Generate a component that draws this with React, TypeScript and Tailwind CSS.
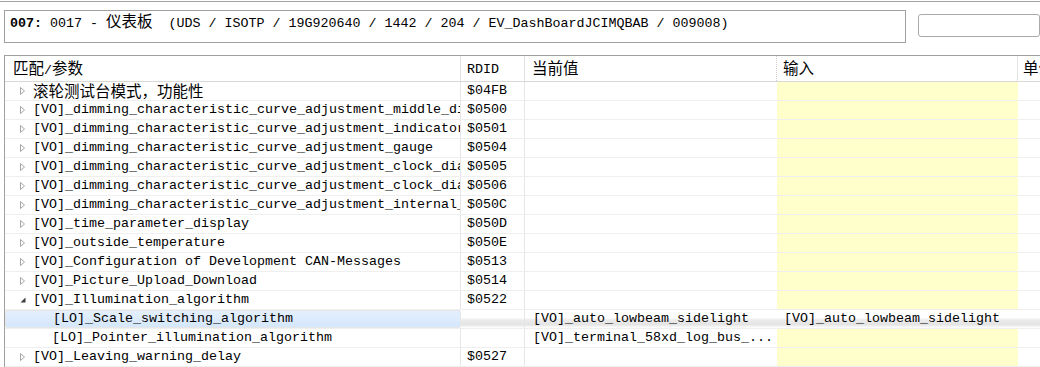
import type { ReactNode } from "react";

type Row = {
  name: string;
  rdid?: string;
  current?: string;
  input?: string;
  level?: 0 | 1;
  expanded?: boolean;
  selected?: boolean;
};

const ROWS: Row[] = [
  { name: "滚轮测试台模式，功能性", rdid: "$04FB" },
  { name: "[VO]_dimming_characteristic_curve_adjustment_middle_display", rdid: "$0500" },
  { name: "[VO]_dimming_characteristic_curve_adjustment_indicator_lamps", rdid: "$0501" },
  { name: "[VO]_dimming_characteristic_curve_adjustment_gauge", rdid: "$0504" },
  { name: "[VO]_dimming_characteristic_curve_adjustment_clock_dial", rdid: "$0505" },
  { name: "[VO]_dimming_characteristic_curve_adjustment_clock_dial_2", rdid: "$0506" },
  { name: "[VO]_dimming_characteristic_curve_adjustment_internal_light", rdid: "$050C" },
  { name: "[VO]_time_parameter_display", rdid: "$050D" },
  { name: "[VO]_outside_temperature", rdid: "$050E" },
  { name: "[VO]_Configuration of Development CAN-Messages", rdid: "$0513" },
  { name: "[VO]_Picture_Upload_Download", rdid: "$0514" },
  { name: "[VO]_Illumination_algorithm", rdid: "$0522", expanded: true },
  {
    name: "[LO]_Scale_switching_algorithm",
    level: 1,
    current: "[VO]_auto_lowbeam_sidelight",
    input: "[VO]_auto_lowbeam_sidelight",
    selected: true,
  },
  {
    name: "[LO]_Pointer_illumination_algorithm",
    level: 1,
    current: "[VO]_terminal_58xd_log_bus_...",
  },
  { name: "[VO]_Leaving_warning_delay", rdid: "$0527" },
];

const COLS = "grid grid-cols-[456px_64px_252px_241px_1fr]";

function Txt({ children }: { children: string }) {
  const parts = children.split(/([\u3000-\u9fff\uff00-\uffef]+)/);
  return (
    <>
      {parts.map((part, i) =>
        /[\u3000-\u9fff\uff00-\uffef]/.test(part) ? (
          <span key={i} className="font-['Noto_Sans_CJK_SC',sans-serif] text-[15.5px] leading-none">
            {part}
          </span>
        ) : (
          <span key={i}>{part}</span>
        )
      )}
    </>
  );
}

function Arrow({ expanded }: { expanded?: boolean }) {
  if (expanded) {
    return (
      <svg width="8" height="8" viewBox="0 0 8 8" className="shrink-0">
        <path d="M6.5 1.5 L6.5 6.5 L1.5 6.5 Z" fill="#3c3c3c" />
      </svg>
    );
  }
  return (
    <svg width="8" height="10" viewBox="0 0 8 10" className="shrink-0">
      <path d="M1.5 1.5 L5.5 5 L1.5 8.5 Z" fill="#fff" stroke="#a6a6a6" strokeWidth="1" />
    </svg>
  );
}

function Cell({ children, className = "" }: { children?: ReactNode; className?: string }) {
  return (
    <div className={`flex h-[18px] items-center overflow-hidden whitespace-pre leading-[18px] ${className}`}>
      {children}
    </div>
  );
}

function TableRow({ row }: { row: Row }) {
  const selBand = row.selected
    ? "bg-[linear-gradient(to_bottom,#ffffff_0%,#ffffff_42%,#ececec_55%,#e4e4e4_80%,#ffffff_100%)]"
    : "";
  return (
    <div className={`${COLS} border-b border-[#efefef]`}>
      <Cell
        className={`border-r border-[#e6e6e6] ${
          row.selected ? "rounded-[2px] border border-[#84acdd] bg-[linear-gradient(to_bottom,#e4effd,#d5e7fc)]" : ""
        }`}
      >
        <div className={row.level === 1 ? "w-[47px] shrink-0" : "flex w-[28px] shrink-0 pl-[14px]"}>
          {row.level === 1 ? null : <Arrow expanded={row.expanded} />}
        </div>
        <Txt>{row.name}</Txt>
      </Cell>
      <Cell className={`border-r border-[#e6e6e6] pl-[6px] ${selBand}`}>{row.rdid}</Cell>
      <Cell className={`pl-[8px] ${selBand}`}>{row.current}</Cell>
      <Cell className={`pl-[7px] ${row.selected ? selBand : "bg-[#ffffcc]"}`}>{row.input}</Cell>
      <Cell className={selBand} />
    </div>
  );
}

export default function App() {
  return (
    <div className="h-[367px] w-[1040px] overflow-hidden bg-white font-['Liberation_Mono','Noto_Sans_CJK_SC',monospace] text-[13.33px] text-black">
      <div className="mt-[1px] border-t border-[#a3a3a3]" />
      <div className="mt-[8px] flex items-start pl-[4px]">
        <div className="h-[33px] w-[902px] overflow-hidden border border-[#a0a0a0] pl-[5px] pt-[2px] leading-[20px] whitespace-pre">
          <span className="font-bold">007:</span> 0017 - <Txt>仪表板</Txt>
          {"  (UDS / ISOTP / 19G920640 / 1442 / 204 / EV_DashBoardJCIMQBAB / 009008)"}
        </div>
        <div className="ml-[12px] mt-[4px] h-[23px] flex-1 rounded-[3px] border border-[#aaaaaa]" />
      </div>
      <div className="ml-[4px] mt-[12px] border-l border-t border-[#a0a0a0]">
        <div className={`${COLS} h-[26px] border-b border-[#d8d8d8] whitespace-nowrap`}>
          <div className="border-r border-[#e4e4e4] pl-[8px] pt-[4px] leading-[20px]">
            <Txt>匹配/参数</Txt>
          </div>
          <div className="border-r border-[#e4e4e4] pl-[6px] pt-[4px] leading-[20px]">RDID</div>
          <div className="border-r border-dotted border-[#cfcfcf] pl-[7px] pt-[4px] leading-[20px]">
            <Txt>当前值</Txt>
          </div>
          <div className="border-r border-[#e4e4e4] pl-[6px] pt-[4px] leading-[20px]">
            <Txt>输入</Txt>
          </div>
          <div className="overflow-hidden pl-[5px] pt-[4px] leading-[20px]">
            <Txt>单位</Txt>
          </div>
        </div>
        {ROWS.map((row, i) => (
          <TableRow key={i} row={row} />
        ))}
      </div>
    </div>
  );
}
